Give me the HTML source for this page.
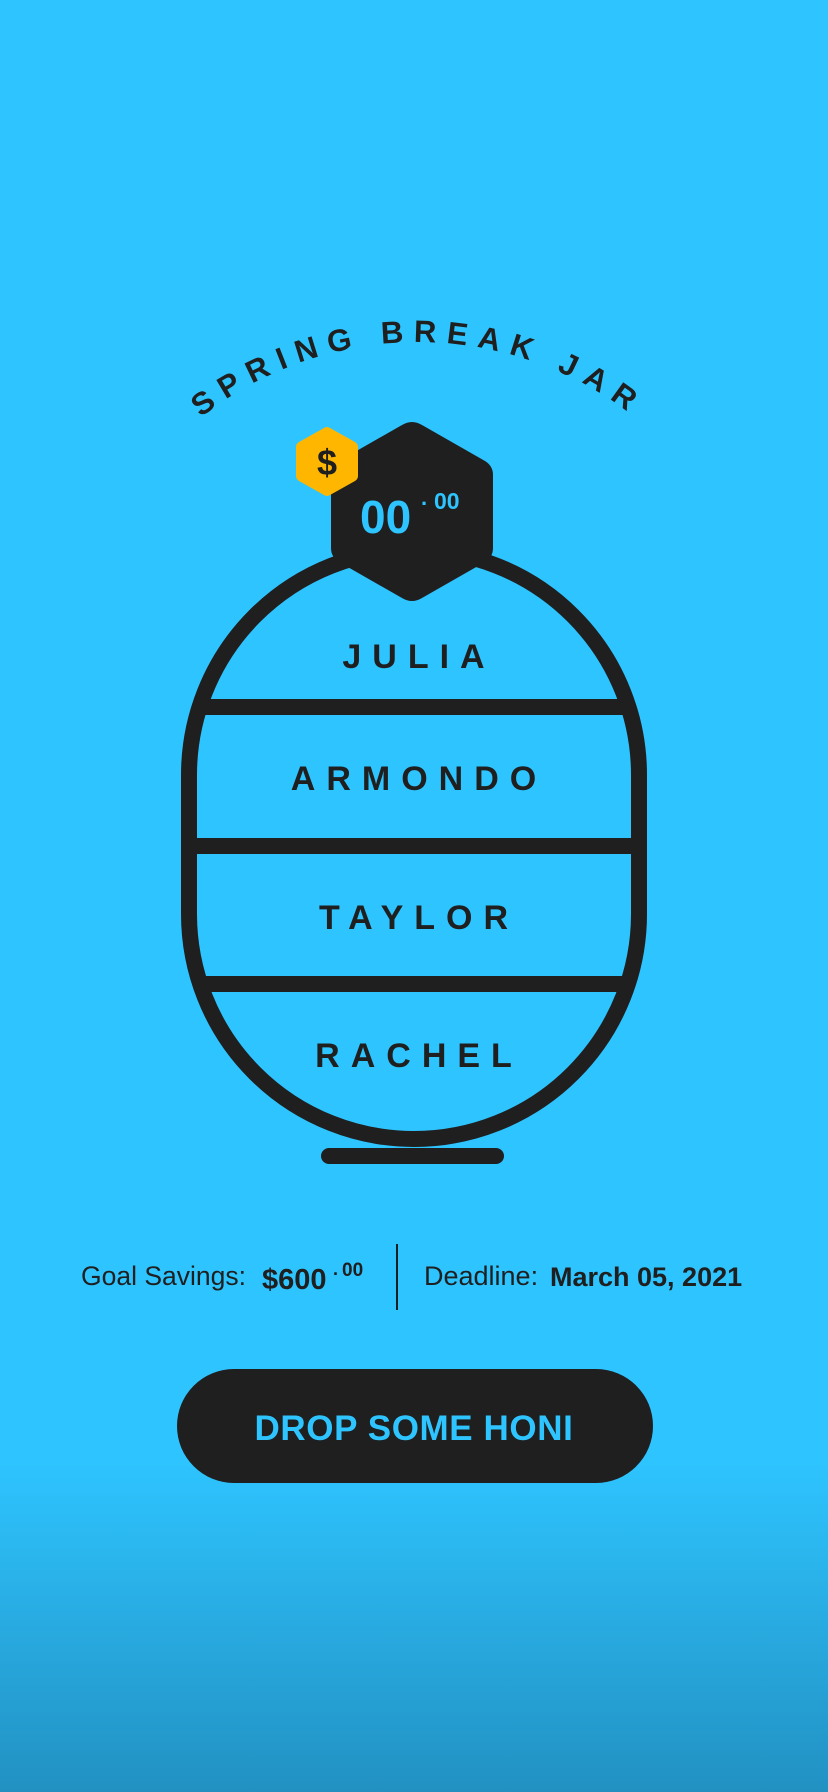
<!DOCTYPE html>
<html><head><meta charset="utf-8"><style>
html,body{margin:0;padding:0}
body{width:828px;height:1792px;overflow:hidden;background:linear-gradient(to bottom,#2ec4ff 0,#2ec4ff 1462px,#2291c2 1792px);font-family:"Liberation Sans",sans-serif}
svg{position:absolute;left:0;top:0}
</style></head><body>
<svg width="828" height="1792" viewBox="0 0 828 1792" xmlns="http://www.w3.org/2000/svg">
<defs>
<path id="arc" d="M 68 692 A 350 350 0 0 1 768 692"/>
<clipPath id="jc"><path d="M189 775 A225 225 0 0 1 639 775 L639 914 A225 225 0 0 1 189 914 Z"/></clipPath>
</defs>
<text font-family="Liberation Sans" font-weight="bold" font-size="31" fill="#1f1f1f"><textPath href="#arc" startOffset="50%" text-anchor="middle" letter-spacing="10">SPRING BREAK JAR</textPath></text>
<g clip-path="url(#jc)" fill="#1f1f1f">
<rect x="150" y="699" width="530" height="16"/>
<rect x="150" y="838" width="530" height="16"/>
<rect x="150" y="976" width="530" height="16"/>
</g>
<path d="M189 775 A225 225 0 0 1 639 775 L639 914 A225 225 0 0 1 189 914 Z" fill="none" stroke="#1f1f1f" stroke-width="16"/>
<rect x="321" y="1148" width="183" height="16" rx="8" fill="#1f1f1f"/>
<path d="M402 425 Q412 419 422 425 L485 461 Q493 466 493 475 L493 548 Q493 557 485 562 L422 598 Q412 604 402 598 L339 562 Q331 557 331 548 L331 475 Q331 466 339 461 Z" fill="#1f1f1f"/>
<path d="M324 428 Q327 426 330 428 L355 442 Q358 444 358 447 L358 476 Q358 479 355 481 L330 495 Q327 497 324 495 L299 481 Q296 479 296 476 L296 447 Q296 444 299 442 Z" fill="#ffb600"/>
<text x="327" y="475" text-anchor="middle" font-weight="bold" font-size="36" fill="#1f1f1f">$</text>
<text x="360" y="533" font-weight="bold" font-size="46" fill="#2ec4ff">00</text>
<text x="421" y="505" font-weight="bold" font-size="22" fill="#2ec4ff">.</text>
<text x="434" y="509" font-weight="bold" font-size="23" fill="#2ec4ff">00</text>
<g font-weight="bold" font-size="34" fill="#1f1f1f" text-anchor="middle" letter-spacing="11">
<text x="419" y="668">JULIA</text>
<text x="419" y="790">ARMONDO</text>
<text x="419" y="929">TAYLOR</text>
<text x="419" y="1067">RACHEL</text>
</g>
<text x="81" y="1285" font-size="26.5" fill="#1f1f1f">Goal Savings:</text>
<text x="262" y="1289" font-size="29" font-weight="bold" fill="#1f1f1f">$600</text>
<text x="333" y="1275" font-size="18" font-weight="bold" fill="#1f1f1f">.</text>
<text x="342" y="1276" font-size="19" font-weight="bold" fill="#1f1f1f">00</text>
<rect x="396" y="1244" width="2" height="66" fill="#1f1f1f"/>
<text x="424" y="1285" font-size="27" fill="#1f1f1f">Deadline:</text>
<text x="550" y="1286" font-size="27" font-weight="bold" fill="#1f1f1f">March 05, 2021</text>
<rect x="177" y="1369" width="476" height="114" rx="57" fill="#1f1f1f"/>
<text x="414" y="1440" text-anchor="middle" font-size="35" font-weight="bold" letter-spacing="0.6" fill="#2ec4ff">DROP SOME HONI</text>
</svg>
</body></html>
